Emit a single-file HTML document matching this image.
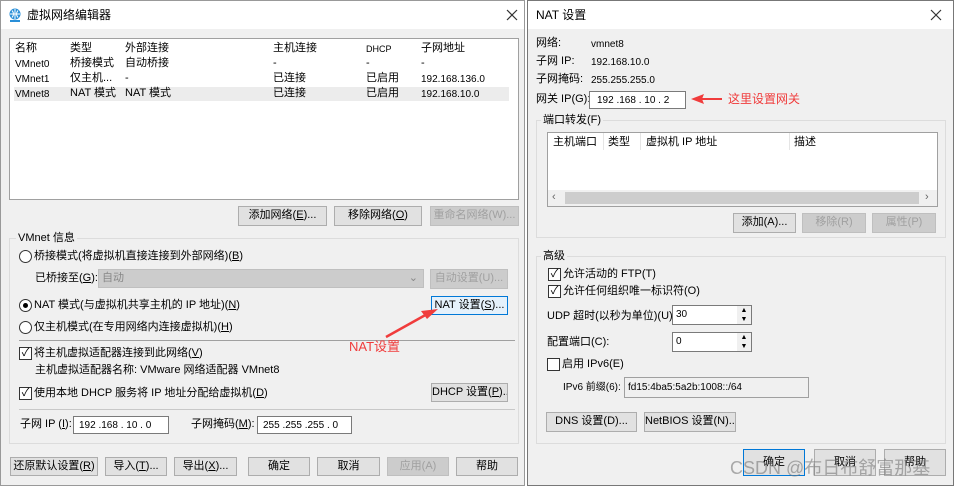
<!DOCTYPE html>
<html><head><meta charset="utf-8"><style>
*{box-sizing:border-box;margin:0;padding:0}
body{width:955px;height:486px;background:#fff;position:relative;overflow:hidden;font-family:"Liberation Sans","Noto Sans CJK SC",sans-serif;font-size:11px;color:#000;line-height:13px}
.a{position:absolute;white-space:nowrap;line-height:13px}
.win{position:absolute;background:#f0f0f0;border:1px solid #999}
.tb{position:absolute;left:0;right:0;top:0;height:28px;background:#fff}
.btn{position:absolute;background:#e1e1e1;border:1px solid #adadad;text-align:center;line-height:17px;font-size:11px;white-space:nowrap;overflow:hidden}
.dis{color:#a0a0a0;background:#ccc;border-color:#bfbfbf}
.box{position:absolute;background:#fff;border:1px solid #7a7a7a;white-space:nowrap;line-height:13px}
.grp{position:absolute;border:1px solid #dcdcdc}
.gl{position:absolute;background:#f0f0f0;padding:0 2px;top:-7px;left:6px;line-height:13px;white-space:nowrap}
.rad{position:absolute;width:13px;height:13px;border:1px solid #333;border-radius:50%;background:#fff}
.chk{position:absolute;width:13px;height:13px;border:1px solid #333;background:#fff;font-size:11px;line-height:11px;text-align:center}
.sep{position:absolute;height:1px;background:#a0a0a0}
.u{text-decoration:underline}
.x{position:absolute;width:12px;height:12px}
</style></head><body>
<!-- left window -->
<div class="win" style="left:0;top:0;width:525px;height:486px">
<div class="tb"></div>
<svg class="a" style="left:6px;top:6px" width="16" height="16"><circle cx="8" cy="7" r="5.5" fill="#2a8fd8"/><path d="M3 7h10M8 2v10M5 3.5q3 3.5 0 7M11 3.5q-3 3.5 0 7" stroke="#fff" stroke-width="1" fill="none"/><rect x="3" y="13" width="10" height="2" fill="#2a8fd8"/></svg>
<div class="a" style="left:26px;top:8px;font-size:12px">虚拟网络编辑器</div>
<svg class="x" style="left:505px;top:8px"><path d="M1 1L11 11M11 1L1 11" stroke="#333" stroke-width="1.2"/></svg>
<div class="box" style="left:8px;top:37px;width:510px;height:162px;border-color:#a0a0a0"></div>
<div class="a" style="left:13px;top:86px;width:495px;height:14px;background:#ececec"></div>
<div class="a" style="left:14px;top:41px">名称</div><div class="a" style="left:69px;top:41px">类型</div><div class="a" style="left:124px;top:41px">外部连接</div><div class="a" style="left:272px;top:41px">主机连接</div><div class="a" style="left:365px;top:42px;font-size:9px">DHCP</div><div class="a" style="left:420px;top:41px">子网地址</div>
<div class="a" style="left:14px;top:57px;font-size:10px">VMnet0</div><div class="a" style="left:69px;top:56px">桥接模式</div><div class="a" style="left:124px;top:56px">自动桥接</div><div class="a" style="left:272px;top:56px">-</div><div class="a" style="left:365px;top:56px">-</div><div class="a" style="left:420px;top:56px">-</div>
<div class="a" style="left:14px;top:72px;font-size:10px">VMnet1</div><div class="a" style="left:69px;top:71px">仅主机...</div><div class="a" style="left:124px;top:71px">-</div><div class="a" style="left:272px;top:71px">已连接</div><div class="a" style="left:365px;top:71px">已启用</div><div class="a" style="left:420px;top:72px;font-size:10px">192.168.136.0</div>
<div class="a" style="left:14px;top:87px;font-size:10px">VMnet8</div><div class="a" style="left:69px;top:86px">NAT 模式</div><div class="a" style="left:124px;top:86px">NAT 模式</div><div class="a" style="left:272px;top:86px">已连接</div><div class="a" style="left:365px;top:86px">已启用</div><div class="a" style="left:420px;top:87px;font-size:10px">192.168.10.0</div>
<div class="btn" style="left:237px;top:205px;width:89px;height:20px">添加网络(<span class="u">E</span>)...</div>
<div class="btn" style="left:333px;top:205px;width:88px;height:20px">移除网络(<span class="u">O</span>)</div>
<div class="btn dis" style="left:429px;top:205px;width:89px;height:20px">重命名网络(W)...</div>
<div class="grp" style="left:8px;top:237px;width:510px;height:206px"><div class="gl">VMnet 信息</div></div>
<div class="rad" style="left:18px;top:249px"></div><div class="a" style="left:33px;top:249px">桥接模式(将虚拟机直接连接到外部网络)(<span class="u">B</span>)</div>
<div class="a" style="left:34px;top:271px">已桥接至(<span class="u">G</span>):</div>
<div class="a" style="left:97px;top:268px;width:326px;height:19px;background:#ccc;border:1px solid #bfbfbf;color:#888;padding:2px 3px">自动<span style="position:absolute;right:5px">⌄</span></div>
<div class="btn dis" style="left:429px;top:268px;width:78px;height:20px">自动设置(U)...</div>
<div class="rad" style="left:18px;top:298px"><div style="position:absolute;left:3px;top:3px;width:5px;height:5px;border-radius:50%;background:#000"></div></div>
<div class="a" style="left:33px;top:298px">NAT 模式(与虚拟机共享主机的 IP 地址)(<span class="u">N</span>)</div>
<div class="btn" style="left:430px;top:295px;width:77px;height:19px;border:1px solid #0078d7;background:#e5f1fb">NAT 设置(<span class="u">S</span>)...</div>
<div class="rad" style="left:18px;top:320px"></div><div class="a" style="left:33px;top:320px">仅主机模式(在专用网络内连接虚拟机)(<span class="u">H</span>)</div>
<div class="sep" style="left:18px;top:339px;width:496px"></div>
<div class="chk" style="left:18px;top:346px">✓</div><div class="a" style="left:33px;top:346px">将主机虚拟适配器连接到此网络(<span class="u">V</span>)</div>
<div class="a" style="left:34px;top:363px">主机虚拟适配器名称: VMware 网络适配器 VMnet8</div>
<div class="chk" style="left:18px;top:386px">✓</div><div class="a" style="left:33px;top:386px">使用本地 DHCP 服务将 IP 地址分配给虚拟机(<span class="u">D</span>)</div>
<div class="btn" style="left:430px;top:382px;width:77px;height:19px">DHCP 设置(<span class="u">P</span>)...</div>
<div class="sep" style="left:18px;top:408px;width:496px;background:#c8c8c8"></div>
<div class="a" style="left:19px;top:417px">子网 IP (<span class="u">I</span>):</div>
<div class="box" style="left:72px;top:415px;width:96px;height:18px;padding:2px 5px;font-size:10px">192 .168 . 10 . 0</div>
<div class="a" style="left:190px;top:417px">子网掩码(<span class="u">M</span>):</div>
<div class="box" style="left:256px;top:415px;width:95px;height:18px;padding:2px 5px;font-size:10px">255 .255 .255 . 0</div>
<div class="btn" style="left:9px;top:456px;width:88px;height:19px">还原默认设置(<span class="u">R</span>)</div>
<div class="btn" style="left:104px;top:456px;width:62px;height:19px">导入(<span class="u">T</span>)...</div>
<div class="btn" style="left:173px;top:456px;width:63px;height:19px">导出(<span class="u">X</span>)...</div>
<div class="btn" style="left:247px;top:456px;width:62px;height:19px">确定</div>
<div class="btn" style="left:316px;top:456px;width:63px;height:19px">取消</div>
<div class="btn dis" style="left:386px;top:456px;width:62px;height:19px">应用(A)</div>
<div class="btn" style="left:455px;top:456px;width:62px;height:19px">帮助</div>
<svg class="a" style="left:0;top:0" width="525" height="486"><path d="M385 336L428 312" stroke="#f03c3c" stroke-width="2.5"/><path d="M437 308L420 310L426 318Z" fill="#f03c3c"/></svg>
<div class="a" style="left:348px;top:338px;color:#f03c3c;font-size:13px;line-height:15px">NAT设置</div>
</div>
<!-- right window -->
<div class="win" style="left:527px;top:0;width:427px;height:486px;border-color:#777">
<div class="tb"></div>
<div class="a" style="left:8px;top:8px;font-size:12px">NAT 设置</div>
<svg class="x" style="left:402px;top:8px"><path d="M1 1L11 11M11 1L1 11" stroke="#333" stroke-width="1.2"/></svg>
<div class="a" style="left:8px;top:36px">网络:</div><div class="a" style="left:63px;top:37px;font-size:10px">vmnet8</div>
<div class="a" style="left:8px;top:54px">子网 IP:</div><div class="a" style="left:63px;top:55px;font-size:10px">192.168.10.0</div>
<div class="a" style="left:8px;top:72px">子网掩码:</div><div class="a" style="left:63px;top:73px;font-size:10px">255.255.255.0</div>
<div class="a" style="left:8px;top:92px">网关 IP(G):</div>
<div class="box" style="left:61px;top:90px;width:97px;height:18px;padding:2px 7px;font-size:10px">192 .168 . 10 .  2</div>
<svg class="a" style="left:160px;top:90px" width="40" height="16"><path d="M3 8L16 3L14 8L16 13Z" fill="#f03c3c"/><path d="M14 8H34" stroke="#f03c3c" stroke-width="2"/></svg>
<div class="a" style="left:200px;top:91px;color:#f03c3c;font-size:12px;line-height:14px">这里设置网关</div>
<div class="grp" style="left:8px;top:119px;width:410px;height:118px"><div class="gl" style="left:4px">端口转发(F)</div></div>
<div class="box" style="left:19px;top:131px;width:391px;height:75px;border-color:#a0a0a0"></div>
<div class="a" style="left:25px;top:135px">主机端口</div><div class="a" style="left:80px;top:135px">类型</div><div class="a" style="left:118px;top:135px">虚拟机 IP 地址</div><div class="a" style="left:266px;top:135px">描述</div>
<div class="a" style="left:75px;top:132px;width:1px;height:17px;background:#e5e5e5"></div><div class="a" style="left:112px;top:132px;width:1px;height:17px;background:#e5e5e5"></div><div class="a" style="left:261px;top:132px;width:1px;height:17px;background:#e5e5e5"></div>
<div class="a" style="left:20px;top:189px;width:389px;height:16px;background:#f0f0f0"></div>
<div class="a" style="left:37px;top:191px;width:354px;height:12px;background:#cdcdcd"></div>
<div class="a" style="left:24px;top:190px;color:#666">‹</div><div class="a" style="left:397px;top:190px;color:#666">›</div>
<div class="btn" style="left:205px;top:212px;width:63px;height:20px">添加(A)...</div>
<div class="btn dis" style="left:274px;top:212px;width:64px;height:20px">移除(R)</div>
<div class="btn dis" style="left:344px;top:212px;width:64px;height:20px">属性(P)</div>
<div class="grp" style="left:8px;top:255px;width:410px;height:188px"><div class="gl" style="left:4px">高级</div></div>
<div class="chk" style="left:20px;top:267px">✓</div><div class="a" style="left:35px;top:267px">允许活动的 FTP(T)</div>
<div class="chk" style="left:20px;top:284px">✓</div><div class="a" style="left:35px;top:284px">允许任何组织唯一标识符(O)</div>
<div class="a" style="left:19px;top:309px">UDP 超时(以秒为单位)(U):</div>
<div class="box" style="left:144px;top:304px;width:80px;height:20px;padding:2px 3px;font-size:10px">30</div>
<div class="a" style="left:209px;top:305px;width:14px;height:18px;background:#f0f0f0;font-size:7px;line-height:9px;text-align:center">▲<br>▼</div>
<div class="a" style="left:19px;top:335px">配置端口(C):</div>
<div class="box" style="left:144px;top:331px;width:80px;height:20px;padding:2px 3px;font-size:10px">0</div>
<div class="a" style="left:209px;top:332px;width:14px;height:18px;background:#f0f0f0;font-size:7px;line-height:9px;text-align:center">▲<br>▼</div>
<div class="chk" style="left:19px;top:357px"></div><div class="a" style="left:34px;top:357px">启用 IPv6(E)</div>
<div class="a" style="left:35px;top:380px;font-size:10px">IPv6 前缀(6):</div>
<div class="a" style="left:96px;top:376px;width:185px;height:21px;border:1px solid #a0a0a0;padding:3px 3px;font-size:10px">fd15:4ba5:5a2b:1008::/64</div>
<div class="btn" style="left:18px;top:411px;width:91px;height:20px">DNS 设置(D)...</div>
<div class="btn" style="left:116px;top:411px;width:92px;height:20px">NetBIOS 设置(N)...</div>
<div class="btn" style="left:215px;top:448px;width:62px;height:27px;border-color:#0078d7;line-height:25px">确定</div>
<div class="btn" style="left:286px;top:448px;width:62px;height:27px;line-height:25px">取消</div>
<div class="btn" style="left:356px;top:448px;width:62px;height:27px;line-height:25px">帮助</div>
<div class="a" style="left:202px;top:457px;font-size:18px;line-height:20px;color:rgba(120,120,120,0.6)">CSDN @布日布舒富那基</div>
</div>
</body></html>
